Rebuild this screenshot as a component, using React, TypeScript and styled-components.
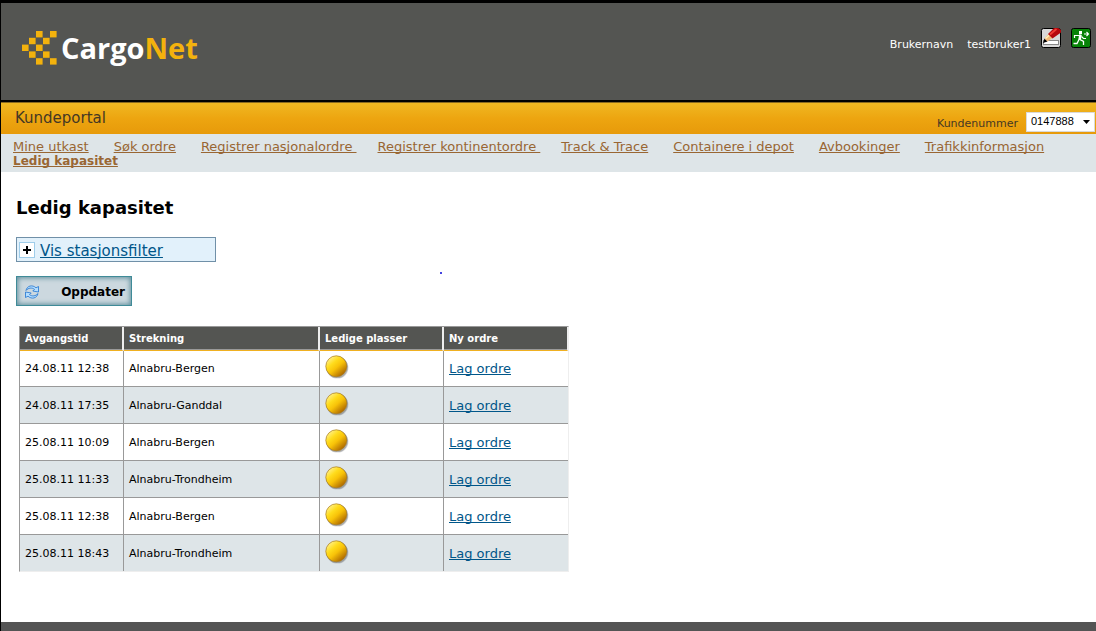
import React from "react";
import styled, { createGlobalStyle } from "styled-components";

const sans = `Verdana, "DejaVu Sans", sans-serif`;

const GlobalStyle = createGlobalStyle`
  *, *::before, *::after { box-sizing: border-box; }
  body { margin: 0; background: #fff; font-family: ${sans}; color: #000; }
`;

const Page = styled.div`
  display: flex;
  flex-direction: column;
  min-height: 100vh;
  border-left: 1px solid #000;
`;

const Header = styled.header`
  display: flex;
  justify-content: space-between;
  align-items: flex-start;
  height: 102px;
  padding: 22px 5px 0 21px;
  background: #545552;
  border-top: 3px solid #000;
  border-bottom: 2px solid #000;
`;

const Logo = styled.a`
  display: flex;
  align-items: center;
  gap: 4px;
  height: 46px;
  color: #fff;
  font: bold 29px/44px "Open Sans", "Noto Sans", sans-serif;
  text-decoration: none;
`;

const LogoAccent = styled.span`
  color: #f3b20d;
`;

const UserBar = styled.div`
  display: flex;
  align-items: flex-start;
  gap: 10px;
  padding-top: 3px;
  color: #fff;
  font-size: 11px;
  line-height: 34px;
`;

const UserName = styled.span`
  padding-left: 4px;
`;

const IconButton = styled.button`
  display: block;
  width: 20px;
  height: 20px;
  padding: 0;
  border: 0;
  background: none;
  cursor: pointer;

  svg { display: block; }
`;

const PortalBar = styled.div`
  display: flex;
  justify-content: space-between;
  height: 32px;
  padding: 0 1px 0 14px;
  border-top: 1px solid #8a6a20;
  background: linear-gradient(#f0b822, #eda510 50%, #e79a0a);
  color: #453824;
`;

const PortalTitle = styled.div`
  font-size: 15px;
  line-height: 30px;
`;

const CustomerField = styled.div`
  display: flex;
  align-items: flex-start;
  gap: 8px;
  padding-top: 9px;
  font-size: 11px;
  line-height: 24px;
`;

const SelectBox = styled.div`
  position: relative;
  width: 69px;
  height: 20px;

  svg {
    position: absolute;
    top: 8px;
    right: 5px;
    pointer-events: none;
  }
`;

const Select = styled.select`
  display: block;
  width: 100%;
  height: 100%;
  padding: 0 16px 2px 4px;
  border: 1px solid #d9d9d9;
  border-radius: 0;
  appearance: none;
  background: #fff;
  color: #000;
  font: 11px "Liberation Sans", Arial, sans-serif;
`;

const Nav = styled.nav`
  display: flex;
  flex-wrap: wrap;
  align-content: flex-start;
  column-gap: 25px;
  height: 38px;
  padding: 6px 12px 0;
  background: #dee5e8;
`;

const NavLink = styled.a<{ $active?: boolean; $trailing?: boolean }>`
  color: #996633;
  font-size: ${(p) => (p.$active ? 12 : 13)}px;
  font-weight: ${(p) => (p.$active ? "bold" : "normal")};
  line-height: 14px;
  margin-right: ${(p) => (p.$trailing ? -4 : 0)}px;
  white-space: pre;
  text-decoration-skip-ink: none;
`;

const Main = styled.main`
  padding: 24px 15px 50px;
`;

const Heading = styled.h1`
  margin: 0 0 17px;
  font-size: 18px;
  line-height: 24px;
`;

const FilterBox = styled.div`
  display: flex;
  align-items: center;
  gap: 5px;
  width: 200px;
  height: 25px;
  padding: 0 2px;
  border: 1px solid #7090a8;
  background: #e2f1fb;
`;

const ExpandButton = styled.button`
  width: 16px;
  height: 16px;
  padding: 0;
  border: 1px solid #9fcdea;
  background: #fff;

  svg { display: block; margin: 0 auto; }
`;

const TextLink = styled.a<{ $size: number }>`
  padding-top: 2px;
  color: #005689;
  font-size: ${(p) => p.$size}px;
  line-height: 18px;
  text-decoration-skip-ink: none;
`;

const Marker = styled.div`
  height: 14px;
  padding: 10px 0 0 424px;

  &::before {
    content: "";
    display: block;
    width: 2px;
    height: 2px;
    background: #4444e0;
  }
`;

const RefreshButton = styled.button`
  display: flex;
  align-items: center;
  justify-content: space-between;
  width: 116px;
  height: 30px;
  padding: 2px 6px 0 7px;
  border: 1px solid #3f8b98;
  background: #ccd8df;
  box-shadow: inset 0 0 5px 1px #5f8f9c;
  color: #000;
  font: bold 12px ${sans};
`;

const Table = styled.table`
  width: 550px;
  margin: 20px 0 0 3px;
  border: 1px solid #999;
  border-right-color: #eee;
  border-bottom-color: #eee;
  border-spacing: 0;
  table-layout: fixed;
  font-size: 11px;
`;

const HeadCell = styled.th<{ $width?: number }>`
  width: ${(p) => (p.$width ? `${p.$width}px` : "auto")};
  height: 24px;
  padding: 0 5px;
  border-right: 2px solid #eee;
  border-bottom: 1px solid #f0b020;
  background: #545552;
  box-shadow: inset 0 -1px #999;
  color: #fff;
  font-size: 10px;
  text-align: left;

  &:last-child { border-right-width: 1px; }
`;

const Row = styled.tr`
  height: 37px;

  &:first-child, &:last-child { height: 36px; }
  &:nth-child(even) { background: #dee5e8; }
  &:last-child td { border-bottom: 0; }
`;

const Cell = styled.td`
  padding: 0 5px;
  border-right: 1px solid #999;
  border-bottom: 1px solid #999;

  &:last-child { padding-top: 1px; border-right: 0; }
  svg { display: block; margin-bottom: 3px; }
`;

const Footer = styled.footer`
  flex: 1;
  min-height: 9px;
  background: #545454;
`;

const squares = [
  [2, 0], [4, 0], [1, 1], [3, 1], [0, 2], [2, 2], [1, 3], [3, 3], [2, 4], [4, 4],
];

const LogoMark = () => (
  <svg width="35" height="34" viewBox="0 0 35 34" aria-hidden="true" fill="#f3b20d">
    {squares.map(([c, r]) => (
      <rect key={`${c}-${r}`} x={c * 7} y={r * 6.8} width="6.6" height="6.4" />
    ))}
  </svg>
);

const EditIcon = () => (
  <svg width="20" height="20" viewBox="0 0 20 20" aria-hidden="true">
    <rect x=".5" y=".5" width="19" height="19" rx="2" fill="#d8d8d8" stroke="#000" />
    <rect x="2.5" y="12.5" width="15" height="4" fill="#fff" stroke="#888" />
    <path d="M2 15 3.500 10.500 6.500 13.500z" fill="#000" />
    <path d="M3.500 10.500 7.500 6l4 4-5 3.500z" fill="#f3b877" />
    <path d="M4.500 10.500 8.500 7" stroke="#fff0b8" strokeWidth="1.600" />
    <path d="M7 6 13 0h4l3 2v2.500l-8.500 6z" fill="#b5080c" />
    <path d="M9 6.500 15.500 1" stroke="#f03c34" strokeWidth="1.800" />
  </svg>
);

const ExitIcon = () => (
  <svg width="20" height="20" viewBox="0 0 20 20" aria-hidden="true">
    <rect x=".5" y=".5" width="19" height="19" rx="2" fill="#078207" stroke="#000" />
    <rect x="8" y="3" width="3" height="3" fill="#fff" />
    <g fill="none" stroke="#fff">
      <path d="M3.500 10V7.500H8M10.500 8.500l2 2H15" strokeWidth="1.200" />
      <path d="M9.500 6.500 8.500 12" strokeWidth="2.600" />
      <path d="M8 11.500 6 15.500H2.500M9 11.500l3.500 2v3.500" strokeWidth="1.300" />
      <path d="M13 6h4.500M15.500 4l2 2-2 2" strokeWidth="1.100" />
    </g>
  </svg>
);

const RefreshIcon = () => (
  <svg width="16" height="16" viewBox="0 0 16 16" aria-hidden="true">
    <g fill="#b4deff" stroke="#1f74d0" strokeWidth=".8" strokeLinejoin="round">
      <path d="M2 6.500C3 1.500 8.500 .5 12 3.800L14.500 2.500V8L8.800 7 10.500 5.300C7.800 3.300 4.300 3.800 2 6.500z" />
      <path d="M14 9.500c-1 5-6.500 6-10 2.700L1.500 13.500V8l5.700 1L5.500 10.700c2.700 2 6.200 1.500 8.500-1.200z" />
    </g>
  </svg>
);

const Ball = ({ id }: { id: string }) => (
  <svg width="24" height="24" viewBox="0 0 24 24" role="img" aria-label="Få ledige plasser">
    <defs>
      <linearGradient id={id} x1=".15" y1=".1" x2=".85" y2=".9">
        <stop offset="0" stopColor="#fff08a" />
        <stop offset=".3" stopColor="#ffdc1c" />
        <stop offset=".55" stopColor="#f8c208" />
        <stop offset="1" stopColor="#a86200" />
      </linearGradient>
    </defs>
    <circle cx="12.500" cy="12.700" r="10.900" fill="#666" opacity=".25" />
    <circle cx="12" cy="12.200" r="10.900" fill="#555" opacity=".35" />
    <circle cx="11.300" cy="11.300" r="10.500" fill={`url(#${id})`} stroke="#a87a18" strokeWidth=".7" />
  </svg>
);

const navItems = [
  "Mine utkast",
  "Søk ordre",
  "Registrer nasjonalordre ",
  "Registrer kontinentordre ",
  "Track & Trace",
  "Containere i depot",
  "Avbookinger",
  "Trafikkinformasjon",
];

const departures = [
  ["24.08.11 12:38", "Alnabru-Bergen"],
  ["24.08.11 17:35", "Alnabru-Ganddal"],
  ["25.08.11 10:09", "Alnabru-Bergen"],
  ["25.08.11 11:33", "Alnabru-Trondheim"],
  ["25.08.11 12:38", "Alnabru-Bergen"],
  ["25.08.11 18:43", "Alnabru-Trondheim"],
];

export default function App() {
  return (
    <Page>
      <GlobalStyle />
      <Header>
        <Logo href="#">
          <LogoMark />
          <span>Cargo<LogoAccent>Net</LogoAccent></span>
        </Logo>
        <UserBar>
          <span>Brukernavn</span>
          <UserName>testbruker1</UserName>
          <IconButton aria-label="Rediger bruker"><EditIcon /></IconButton>
          <IconButton aria-label="Logg ut"><ExitIcon /></IconButton>
        </UserBar>
      </Header>
      <PortalBar>
        <PortalTitle>Kundeportal</PortalTitle>
        <CustomerField>
          <label htmlFor="customer">Kundenummer</label>
          <SelectBox>
            <Select id="customer" defaultValue="0147888">
              <option>0147888</option>
            </Select>
            <svg width="7" height="4" viewBox="0 0 7 4" aria-hidden="true"><path d="M0 0h7L3.500 4z" /></svg>
          </SelectBox>
        </CustomerField>
      </PortalBar>
      <Nav>
        {navItems.map((item) => (
          <NavLink key={item} href="#" $trailing={item.endsWith(" ")}>{item}</NavLink>
        ))}
        <NavLink href="#" $active>Ledig kapasitet</NavLink>
      </Nav>
      <Main>
        <Heading>Ledig kapasitet</Heading>
        <FilterBox>
          <ExpandButton aria-label="Utvid">
            <svg width="8" height="8" viewBox="0 0 8 8"><path d="M3 0h2v3h3v2H5v3H3V5H0V3h3z" /></svg>
          </ExpandButton>
          <TextLink href="#" $size={15}>Vis stasjonsfilter</TextLink>
        </FilterBox>
        <Marker />
        <RefreshButton>
          <RefreshIcon />
          <span>Oppdater</span>
        </RefreshButton>
        <Table>
          <thead>
            <tr>
              <HeadCell $width={104}>Avgangstid</HeadCell>
              <HeadCell $width={196}>Strekning</HeadCell>
              <HeadCell $width={124}>Ledige plasser</HeadCell>
              <HeadCell>Ny ordre</HeadCell>
            </tr>
          </thead>
          <tbody>
            {departures.map(([time, route]) => (
              <Row key={time}>
                <Cell>{time}</Cell>
                <Cell>{route}</Cell>
                <Cell><Ball id={`ball-${time.replace(/\W/g, "")}`} /></Cell>
                <Cell><TextLink href="#" $size={13}>Lag ordre</TextLink></Cell>
              </Row>
            ))}
          </tbody>
        </Table>
      </Main>
      <Footer />
    </Page>
  );
}
